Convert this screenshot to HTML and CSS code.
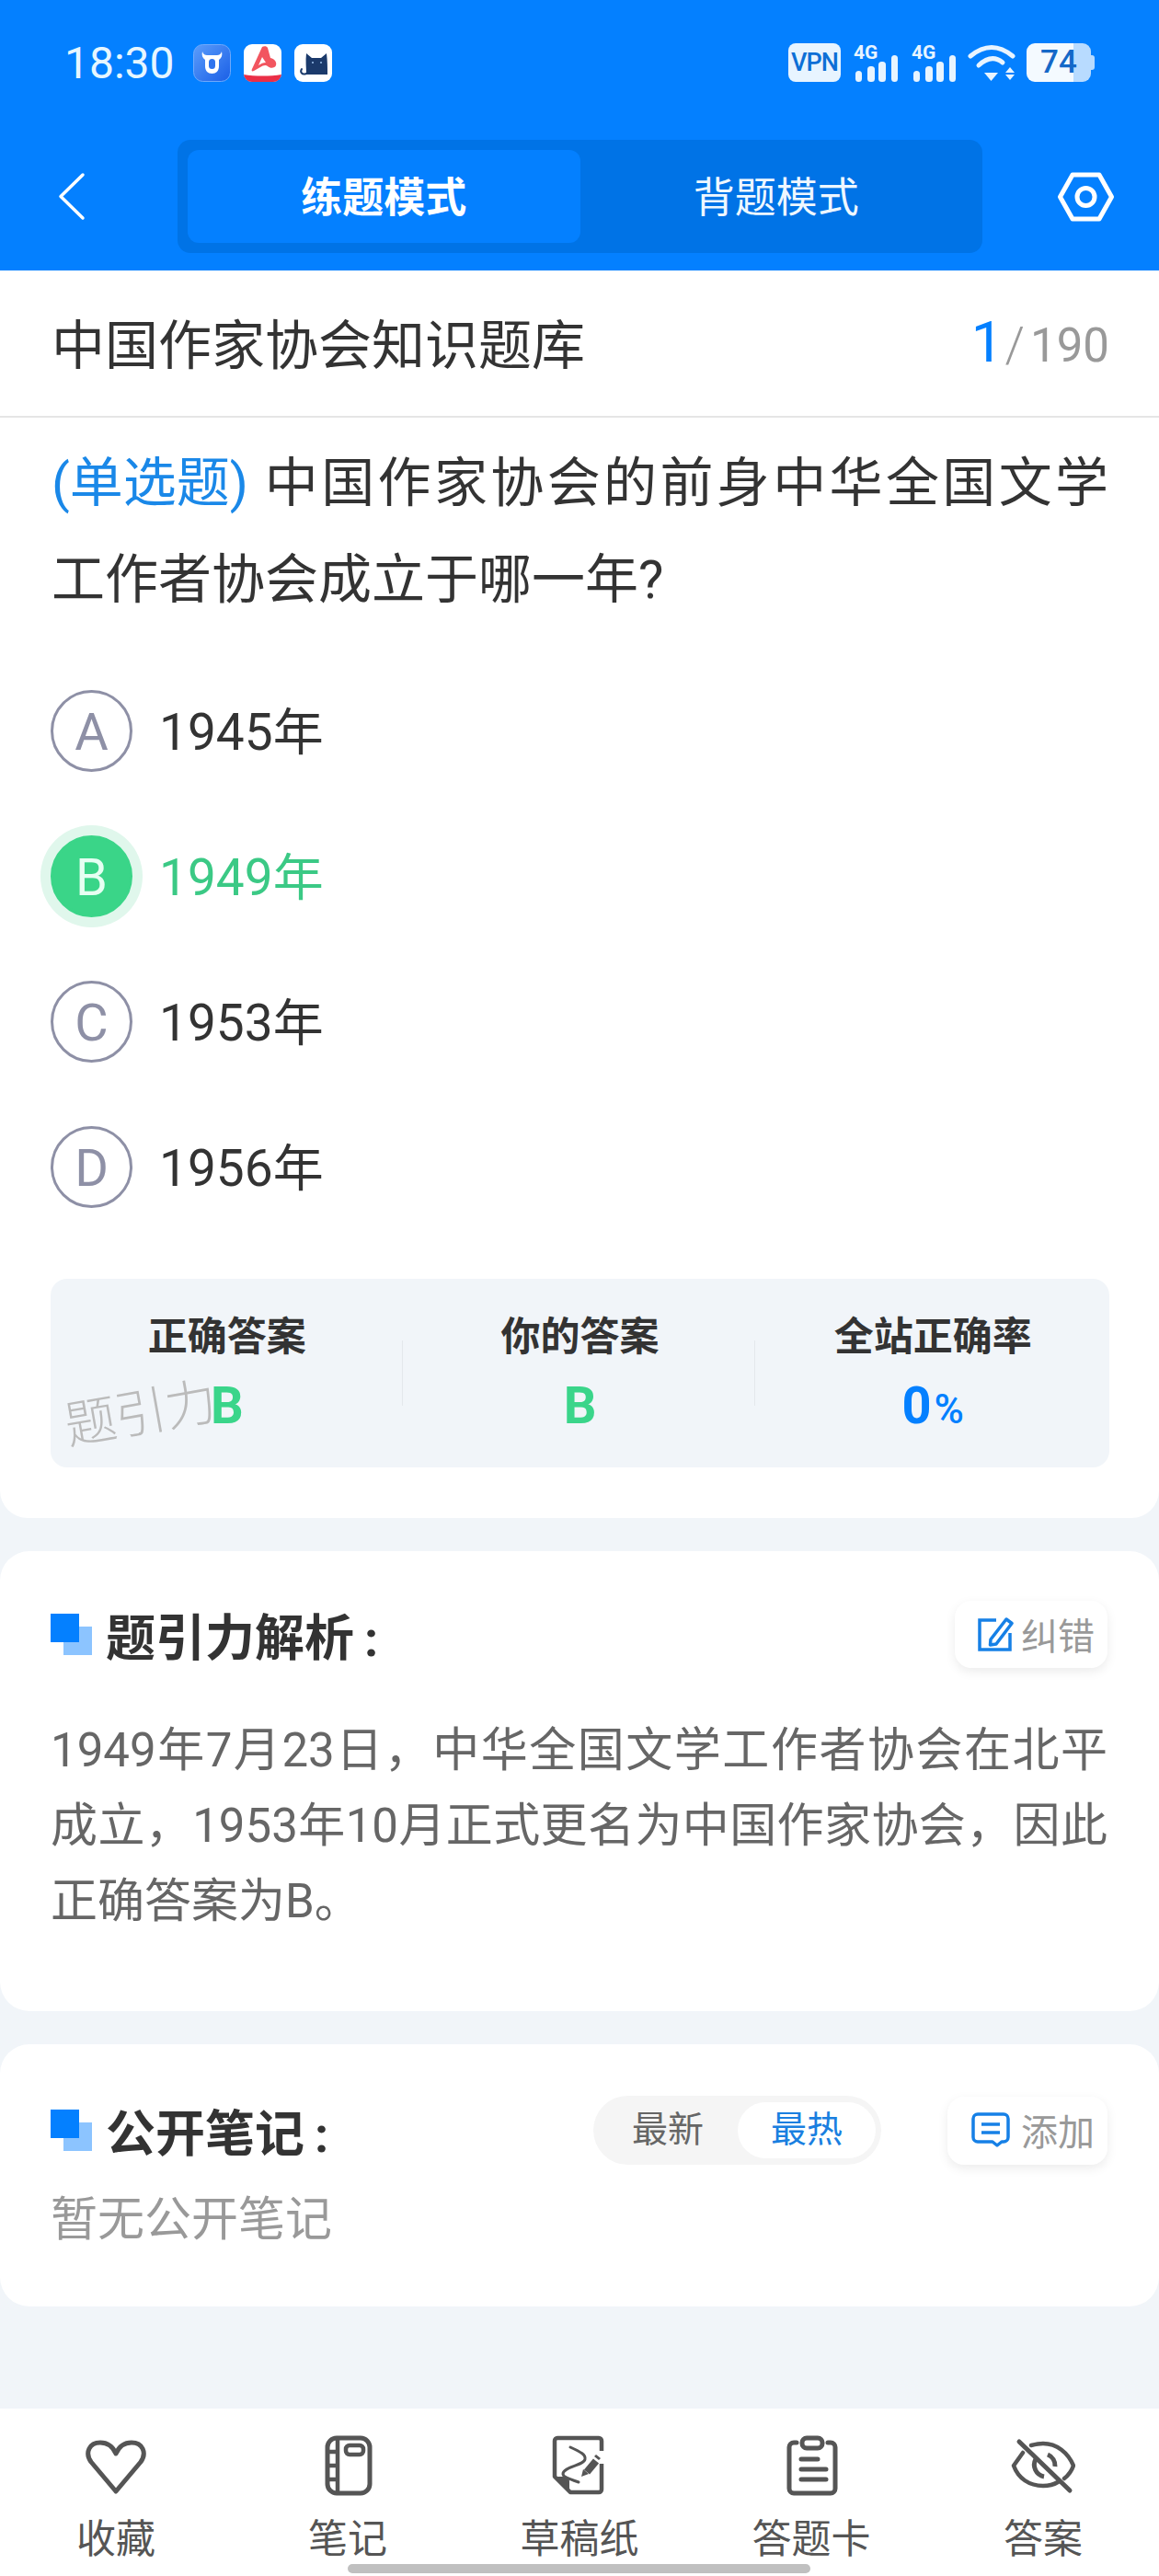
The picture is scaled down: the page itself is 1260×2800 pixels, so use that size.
FILE: index.html
```html
<!DOCTYPE html>
<html lang="zh-CN">

<head>
  <meta charset="UTF-8">
  <meta name="viewport" content="width=device-width, initial-scale=1.0">
  <title>中国作家协会知识题库</title>
  <link rel="stylesheet" href="styles.css">
</head>

<body>
  <header class="top">
    <div class="status">
      <span class="clock">18:30</span>
      <div class="apps">
        <svg class="app" viewBox="0 0 41 41">
          <defs>
            <linearGradient id="appBlue" x1="0" y1="0" x2="1" y2="1">
              <stop offset="0" stop-color="#5b9dfb" />
              <stop offset="1" stop-color="#1a5fe6" />
            </linearGradient>
          </defs>
          <rect x="0.5" y="0.5" width="40" height="40" rx="10" fill="url(#appBlue)" stroke="#6fa9fb" />
          <path d="M10 8c1 3 3 4 5 4h11c2 0 4-1 5-4 1 4 0 7-3 9v7c0 5-3 8-7.500 8S13 29 13 24v-7c-3-2-4-5-3-9z" fill="#fff" />
          <rect x="17" y="16" width="7" height="11" rx="3.500" fill="#2f74ee" />
        </svg>
        <svg class="app" viewBox="0 0 41 41">
          <rect width="41" height="41" rx="9" fill="#fff" />
          <path d="M0 33c12 2 29 2 41 0a9 9 0 0 1-9 8H9a9 9 0 0 1-9-8z" fill="#ea2f47" />
          <path d="M20 3c2-1 5-1 6 1l3 11c5 1 7 5 6 8-1 3-6 4-9 1-2-2-5-1-8 1l-7 4c-2 1-3 0-2-2z" fill="#f2555f" />
          <path d="M20 14l4 6c-3 0-5 1-8 3z" fill="#fff" />
        </svg>
        <svg class="app" viewBox="0 0 41 41">
          <rect width="41" height="41" rx="9" fill="#fff" />
          <path d="M13 10l6 5h10l6-5c1 8 1 16 1 23H13c0-7-1-15 0-23z" fill="#1b3a6b" />
          <path d="M13 32c-5 2-7-2-5-5" fill="none" stroke="#1b3a6b" stroke-width="2" stroke-linecap="round" />
          <circle cx="20" cy="20" r="1" fill="#9fc4ee" />
          <circle cx="29" cy="20" r="1" fill="#9fc4ee" />
        </svg>
      </div>
      <div class="sys">
        <span class="vpn">VPN</span>
        <svg class="signal" viewBox="0 0 50 42">
          <text class="signal-text" x="1" y="17">4G</text>
          <rect x="3" y="30" width="7" height="12" rx="3.500" />
          <rect x="16" y="25" width="8" height="17" rx="3.500" />
          <rect x="28" y="20" width="8" height="22" rx="3.500" />
          <rect x="42" y="13" width="7" height="29" rx="3.500" />
        </svg>
        <svg class="signal" viewBox="0 0 50 42">
          <text class="signal-text" x="1" y="17">4G</text>
          <rect x="3" y="30" width="7" height="12" rx="3.500" />
          <rect x="16" y="25" width="8" height="17" rx="3.500" />
          <rect x="28" y="20" width="8" height="22" rx="3.500" />
          <rect x="42" y="13" width="7" height="29" rx="3.500" />
        </svg>
        <svg class="wifi" viewBox="0 0 52 42">
          <path d="M3 14Q26-5 49 14" fill="none" stroke="#e8f4ff" stroke-width="5" stroke-linecap="round" />
          <path d="M12 24Q26 11 38 21" fill="none" stroke="#e8f4ff" stroke-width="5" stroke-linecap="round" />
          <path d="M18 32h15l-7.500 9z" fill="#e8f4ff" />
          <path d="M46 26l5 6H41zM41 34h10l-5 6z" fill="#e8f4ff" />
        </svg>
        <div class="battery">
          <div class="battery-body">74</div>
          <div class="battery-nub"></div>
        </div>
      </div>
    </div>
    <nav class="nav">
      <svg class="back" viewBox="0 0 30 54">
        <path d="M27 3L3 26.500 27 50" fill="none" stroke="#fff" stroke-width="3.500" stroke-linecap="round" stroke-linejoin="round" />
      </svg>
      <div class="tabs">
        <div class="tab active">练题模式</div>
        <div class="tab">背题模式</div>
      </div>
      <svg class="gear" viewBox="0 0 61 54">
        <path d="M2.500 27L16 3h29l13.500 24L45 51H16z" fill="none" stroke="#fff" stroke-width="5" stroke-linejoin="round" />
        <circle cx="30.500" cy="27" r="9.500" fill="none" stroke="#fff" stroke-width="5" />
      </svg>
    </nav>
  </header>

  <main class="main">
    <section class="question-card">
      <div class="title-row">
        <h1 class="bank-name">中国作家协会知识题库</h1>
        <div class="counter"><span class="counter-now">1</span><span class="counter-slash">/</span><span class="counter-all">190</span></div>
      </div>
      <p class="question"><span class="q-type">(单选题)</span> 中国作家协会的前身中华全国文学工作者协会成立于哪一年?</p>

      <div class="options">
        <div class="option"><span class="letter">A</span><span>1945年</span></div>
        <div class="option correct"><span class="letter">B</span><span>1949年</span></div>
        <div class="option"><span class="letter">C</span><span>1953年</span></div>
        <div class="option"><span class="letter">D</span><span>1956年</span></div>
      </div>

      <div class="answer-box">
        <div class="answer-col">
          <div class="answer-label">正确答案</div>
          <div class="answer-value green">B</div>
        </div>
        <div class="answer-col">
          <div class="answer-label">你的答案</div>
          <div class="answer-value green">B</div>
        </div>
        <div class="answer-col">
          <div class="answer-label">全站正确率</div>
          <div class="answer-value blue">0<small>%</small></div>
        </div>
        <div class="watermark">题引力</div>
      </div>
    </section>

    <section class="card analysis">
      <div class="card-head">
        <svg class="mark" viewBox="0 0 45 45">
          <rect x="14" y="14" width="31" height="31" fill="#8cc4ff" />
          <rect width="31" height="31" fill="#0480ff" />
        </svg>
        <h2 class="card-title">题引力解析<span class="colon">:</span></h2>
        <div class="mini-btn push">
          <svg class="mini-icon" viewBox="0 0 40 40">
            <path d="M21 5H3v32h33V19" fill="none" stroke="#1680e6" stroke-width="3.500" />
            <path d="M15 26L32 4l6 4.500L21 31l-6.500 1z" fill="none" stroke="#1680e6" stroke-width="3.500" stroke-linejoin="round" />
          </svg>
          纠错
        </div>
      </div>
      <p class="analysis-text">1949年7月23日，中华全国文学工作者协会在北平成立，1953年10月正式更名为中国作家协会，因此正确答案为B。</p>
    </section>

    <section class="card notes">
      <div class="card-head">
        <svg class="mark" viewBox="0 0 45 45">
          <rect x="14" y="14" width="31" height="31" fill="#8cc4ff" />
          <rect width="31" height="31" fill="#0480ff" />
        </svg>
        <h2 class="card-title">公开笔记<span class="colon">:</span></h2>
        <div class="sort push">
          <span class="sort-item">最新</span>
          <span class="sort-item on">最热</span>
        </div>
        <div class="mini-btn add">
          <svg class="mini-icon" viewBox="0 0 42 38">
            <path d="M7 2h28a5 5 0 0 1 5 5v20a5 5 0 0 1-5 5h-2l-5 4-5-4H7a5 5 0 0 1-5-5V7a5 5 0 0 1 5-5z" fill="none" stroke="#1680e6" stroke-width="3.500" stroke-linejoin="round" />
            <path d="M11 13h20M11 22h20" stroke="#1680e6" stroke-width="3.500" />
          </svg>
          添加
        </div>
      </div>
      <p class="empty">暂无公开笔记</p>
    </section>
  </main>

  <footer class="tabbar">
    <div class="tool">
      <svg class="tool-icon" viewBox="0 0 70 70">
        <path d="M35 64L8 32C1 22 6 11 18 11c8 0 14 5 17 12 3-7 9-12 17-12 12 0 17 11 10 21z" fill="none" stroke="#555" stroke-width="5" stroke-linejoin="round" />
      </svg>
      <span>收藏</span>
    </div>
    <div class="tool">
      <svg class="tool-icon" viewBox="0 0 70 70">
        <rect x="13" y="6" width="46" height="60" rx="10" fill="none" stroke="#555" stroke-width="5" />
        <path d="M24 6v60M13 21h11M13 36h11M13 51h11" fill="none" stroke="#555" stroke-width="4.500" />
        <rect x="33" y="14" width="19" height="10" rx="4" fill="none" stroke="#555" stroke-width="4.500" />
      </svg>
      <span>笔记</span>
    </div>
    <div class="tool">
      <svg class="tool-icon" viewBox="0 0 70 70">
        <path d="M59 20V9a3 3 0 0 0-3-3H11a3 3 0 0 0-3 3v39l17 17h31a3 3 0 0 0 3-3V34" fill="none" stroke="#555" stroke-width="4.500" stroke-linejoin="round" />
        <path d="M8 48h11a5 5 0 0 1 5 5v12z" fill="#555" />
        <path d="M25 16c11 5 17 8 16 13-1 7-24 8-24 16 0 4 9 6 17 9" fill="none" stroke="#555" stroke-width="3" stroke-linecap="round" />
        <path d="M53 31L43 43" fill="none" stroke="#555" stroke-width="8" />
        <path d="M39 40l6 5-8 3zM53 24l5 4-2 2-5-4z" fill="#555" />
      </svg>
      <span>草稿纸</span>
    </div>
    <div class="tool">
      <svg class="tool-icon" viewBox="0 0 70 70">
        <path d="M19 11h-3a5 5 0 0 0-5 5v45a5 5 0 0 0 5 5h40a5 5 0 0 0 5-5V16a5 5 0 0 0-5-5h-3" fill="none" stroke="#555" stroke-width="5" stroke-linecap="round" />
        <rect x="25" y="6" width="22" height="11" rx="5" fill="none" stroke="#555" stroke-width="5" />
        <path d="M24 29h18M24 40h27M24 51h27" fill="none" stroke="#555" stroke-width="5" stroke-linecap="round" />
      </svg>
      <span>答题卡</span>
    </div>
    <div class="tool">
      <svg class="tool-icon" viewBox="0 0 70 70">
        <path d="M13 22L3 36c5 14 17 22 32 22 6 0 11-1 16-4M22 14c4-1 8-2 13-2 15 0 27 10 33 24-2 6-6 11-10 14" fill="none" stroke="#555" stroke-width="4.500" stroke-linecap="round" stroke-linejoin="round" />
        <path d="M9 10l55 53" fill="none" stroke="#555" stroke-width="5" stroke-linecap="round" />
        <path d="M40 24a13 13 0 0 1 8 13M27 29a13 13 0 0 0 9 19" fill="none" stroke="#555" stroke-width="5" />
      </svg>
      <span>答案</span>
    </div>
    <div class="home-bar"></div>
  </footer>
</body>

</html>
```

FILE: styles.css
```css
* {
  box-sizing: border-box;
}

body {
  margin: 0;
  width: 1260px;
  height: 2800px;
  display: flex;
  flex-direction: column;
  background-color: #f1f5f9;
  font-family: Roboto, "Noto Sans CJK SC", sans-serif;
  color: #333;
}

h1,
h2,
p {
  margin: 0;
  font-weight: normal;
}

/* blue header */
.top {
  height: 294px;
  padding-top: 47px;
  background-color: #0480ff;
}

.status {
  display: flex;
  align-items: center;
  height: 42px;
  padding: 0 70px;
}

.clock {
  width: 140px;
  font-size: 48px;
  color: #e6f6ff;
}

.apps {
  display: flex;
  gap: 14px;
}

.app {
  width: 41px;
  height: 41px;
}

.sys {
  display: flex;
  align-items: center;
  gap: 13px;
  margin-left: auto;
}

.vpn {
  width: 57px;
  height: 42px;
  border-radius: 8px;
  background-color: #e8f4ff;
  font-size: 27px;
  font-weight: 500;
  line-height: 42px;
  letter-spacing: -1px;
  text-align: center;
  color: #0d6fd6;
}

.signal {
  width: 50px;
  height: 42px;
  fill: #e8f4ff;
  overflow: visible;
}

.signal-text {
  font-size: 21px;
  font-weight: 700;
}

.wifi {
  width: 52px;
  height: 42px;
  margin-left: -1px;
}

.battery {
  display: flex;
  align-items: center;
  margin-left: -1px;
}

.battery-body {
  width: 70px;
  height: 42px;
  padding-left: 15px;
  border-radius: 9px;
  background: linear-gradient(to right, #f4faff 73%, #b8dbff 73%);
  font-size: 35px;
  font-weight: 500;
  line-height: 42px;
  color: #1468c8;
}

.battery-nub {
  width: 4px;
  height: 16px;
  border-radius: 0 3px 3px 0;
  background-color: #b8dbff;
}

.nav {
  display: flex;
  align-items: center;
  height: 123px;
  margin-top: 63px;
  padding-left: 63px;
}

.back {
  width: 30px;
  height: 54px;
}

.tabs {
  display: flex;
  align-items: center;
  width: 875px;
  height: 123px;
  margin-left: 100px;
  padding: 0 11px;
  border-radius: 14px;
  background-color: #0073e6;
}

.tab {
  flex: 1;
  height: 101px;
  padding-top: 2px;
  border-radius: 12px;
  font-size: 45px;
  line-height: 101px;
  text-align: center;
  color: #eef7ff;
}

.tab.active {
  background-color: #0480ff;
  font-weight: 700;
  color: #fff;
}

.gear {
  width: 61px;
  height: 54px;
  margin-left: 82px;
}

.main {
  flex: 1;
}

/* question */
.question-card {
  height: 1356px;
  border-radius: 0 0 30px 30px;
  background-color: #fff;
}

.title-row {
  display: flex;
  align-items: center;
  justify-content: space-between;
  height: 160px;
  padding: 0 54px 4px 56px;
  border-bottom: 2px solid #e5e5e5;
}

.bank-name {
  font-size: 58px;
}

.counter {
  display: flex;
  align-items: baseline;
}

.counter-now {
  font-size: 62px;
  color: #0480ff;
}

.counter-slash {
  margin: 0 6px 0 2px;
  font-size: 54px;
  font-weight: 300;
  color: #999;
}

.counter-all {
  font-size: 51px;
  color: #999;
}

.question {
  margin-top: 19px;
  padding: 0 55px 0 56px;
  font-size: 58px;
  line-height: 105px;
  text-align: justify;
}

.q-type {
  display: inline-block;
  color: #1a88e8;
}

.options {
  margin-top: 32px;
}

.option {
  display: flex;
  align-items: center;
  height: 158px;
  padding-left: 55px;
  font-size: 55px;
}

.option > span:last-child {
  margin-top: -7px;
}

.letter {
  display: flex;
  align-items: center;
  justify-content: center;
  width: 89px;
  height: 89px;
  margin-right: 29px;
  padding-top: 3px;
  border: 3px solid #8e90a6;
  border-radius: 50%;
  font-size: 56px;
  color: #8e90a6;
}

.option.correct {
  color: #3bc985;
}

.option.correct .letter {
  border-color: #3ad588;
  background-color: #3ad588;
  box-shadow: 0 0 0 11px #e0f7ec;
  color: #e6fff2;
}

.answer-box {
  position: relative;
  display: flex;
  width: 1151px;
  height: 205px;
  margin: 43px 0 0 55px;
  border-radius: 18px;
  background-color: #f1f5f9;
}

.answer-col {
  position: relative;
  flex: 1;
  padding-top: 37px;
  text-align: center;
}

.answer-col + .answer-col::before {
  content: "";
  position: absolute;
  left: -2px;
  top: 67px;
  width: 1px;
  height: 71px;
  background-color: #e4e8ec;
}

.answer-label {
  font-size: 43px;
  font-weight: 700;
  line-height: 52px;
}

.answer-value {
  margin-top: 16px;
  font-size: 56px;
  font-weight: 700;
  line-height: 66px;
}

.answer-value small {
  margin-left: 3px;
  font-size: 44px;
  font-weight: 500;
}

.green {
  color: #3ad58a;
}

.blue {
  color: #0480ff;
}

.watermark {
  position: absolute;
  left: 15px;
  top: 112px;
  font-size: 56px;
  font-weight: 300;
  line-height: 70px;
  letter-spacing: -1px;
  color: #bbb;
  transform: rotate(-10deg);
}

/* analysis + notes */
.card {
  margin-top: 36px;
  padding: 54px 56px 0 55px;
  border-radius: 32px;
  background-color: #fff;
}

.analysis {
  height: 500px;
}

.notes {
  height: 285px;
  padding-top: 56px;
}

.card-head {
  display: flex;
  align-items: center;
  height: 73px;
}

.notes .card-head {
  height: 75px;
}

.mark {
  width: 45px;
  height: 45px;
  margin-right: 15px;
}

.card-title {
  font-size: 54px;
  font-weight: 700;
}

.colon {
  margin-left: 11px;
}

.push {
  margin-left: auto;
}

.mini-btn {
  display: flex;
  align-items: center;
  gap: 8px;
  height: 73px;
  padding: 0 14px 2px 24px;
  border-radius: 18px;
  background-color: #fff;
  box-shadow: 0 4px 12px rgba(0, 0, 0, 0.08);
  font-size: 40px;
  color: #999;
}

.mini-icon {
  width: 40px;
  height: 40px;
}

.mini-btn.add {
  gap: 12px;
  height: 74px;
  margin-left: 72px;
  padding-left: 26px;
}

.mini-btn.add .mini-icon {
  width: 42px;
  height: 38px;
}

.sort {
  display: flex;
  align-items: center;
  justify-content: space-between;
  width: 313px;
  height: 75px;
  padding: 0 6px 0 42px;
  border-radius: 38px;
  background-color: #f5f5f5;
}

.sort-item {
  font-size: 39px;
  line-height: 61px;
  color: #666;
}

.sort-item.on {
  width: 150px;
  height: 61px;
  border-radius: 31px;
  background-color: #fff;
  text-align: center;
  color: #1a7fe0;
}

.analysis-text {
  margin-top: 49px;
  font-size: 51px;
  line-height: 82px;
  text-align: justify;
  color: #666;
}

.empty {
  margin-top: 19px;
  font-size: 51px;
  line-height: 82px;
  color: #999;
}

/* bottom toolbar */
.tabbar {
  position: relative;
  display: flex;
  height: 182px;
  padding-top: 26px;
  background-color: #fff;
}

.tool {
  display: flex;
  flex-direction: column;
  align-items: center;
  flex: 1;
  font-size: 43px;
  line-height: 60px;
  color: #555;
}

.tool-icon {
  width: 70px;
  height: 70px;
  margin-bottom: 16px;
}

.home-bar {
  position: absolute;
  left: 378px;
  bottom: 3px;
  width: 503px;
  height: 10px;
  border-radius: 5px;
  background-color: #c0c0c0;
}
```
